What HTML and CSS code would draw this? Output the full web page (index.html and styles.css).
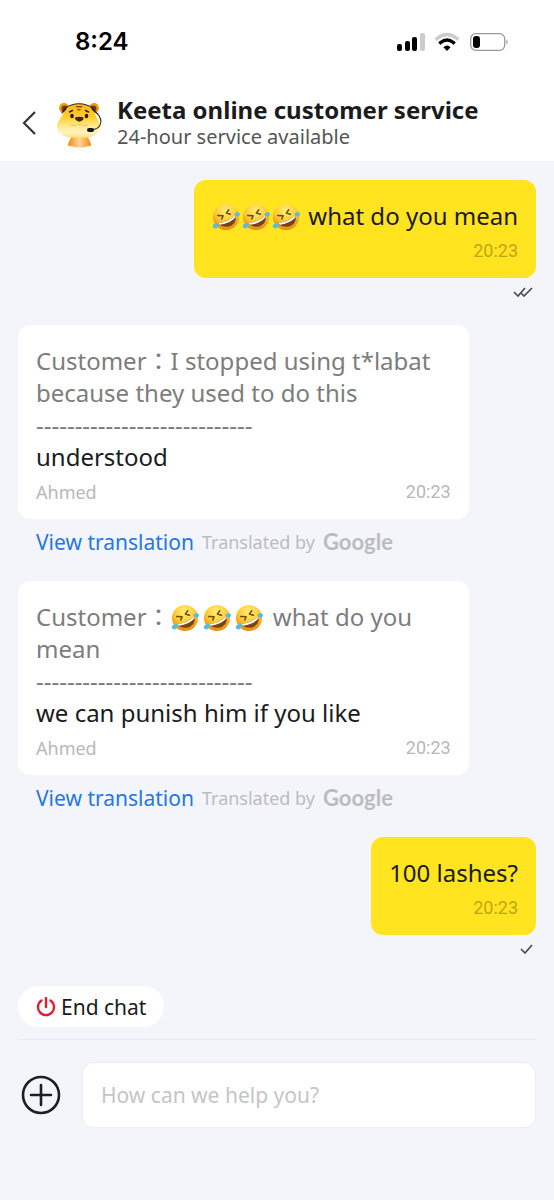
FILE: index.html
```html
<!DOCTYPE html>
<html lang="en">
<head>
    <meta charset="UTF-8">
    <meta name="viewport" content="width=device-width, initial-scale=1.0">
    <title>Keeta online customer service</title>
    <link rel="stylesheet" href="styles.css">
</head>
<body>
    <!-- Shared icons -->
    <svg class="sprite" aria-hidden="true">
        <defs>
            <radialGradient id="face" cx="50%" cy="25%" r="75%">
                <stop offset="0" stop-color="#fff176"/>
                <stop offset="0.55" stop-color="#fcc934"/>
                <stop offset="1" stop-color="#e8860c"/>
            </radialGradient>
        </defs>
        <symbol id="rofl" viewBox="0 0 28 28">
            <circle cx="14" cy="14" r="13" fill="url(#face)"/>
            <path d="M5.7 12.6l5.4.2-1.3 3.2M16.8 6.8l-2.4 3.2 4 1.2" fill="none" stroke="#6b4a06" stroke-width="1.5" stroke-linecap="round" stroke-linejoin="round"/>
            <path d="M6.4 20Q17 19 23.4 12.4C25 17.2 22 22 17.4 23.4 13 24.6 8.6 23.4 6.4 20z" fill="#7a4316"/>
            <path d="M6.4 20Q17 19 23.4 12.4L23.4 14.6Q17.6 20.8 8.2 21.8z" fill="#fff"/>
            <path d="M1.2 21.8c2-1.8 4-2.2 5.6-1.6.2 2.4-1 5-3.4 5.2-2 .1-3.2-2-2.2-3.6zM22.4 11.2c1-1.6 3-2.2 4.600-1.600 1.400.8 1.200 3-.2 3.600-1.600.6-3.600 0-4.400-2z" fill="#52bde6"/>
        </symbol>
    </svg>

    <header>
        <div class="status-bar">
            <span class="clock">8:24</span>
            <svg class="status-icons" viewBox="0 0 112 20" aria-hidden="true">
                <rect x="0" y="12" width="5" height="7" rx="2"/>
                <rect x="8" y="9" width="5" height="10" rx="2"/>
                <rect x="15" y="5" width="5" height="14" rx="2"/>
                <rect x="23" y="1" width="5" height="18" rx="2" fill="#ccc"/>
                <path d="M40 6.5Q50 -1.5 60 6.5" fill="none" stroke="#ccc" stroke-width="3.4" stroke-linecap="square"/>
                <path d="M43.6 10.5Q50 5.500 56.400 10.500" fill="none" stroke="#000" stroke-width="3.4" stroke-linecap="square"/>
                <path d="M50 19l-3.6-3.8Q50 12 53.6 15.2z"/>
                <rect x="73.7" y="1.7" width="34" height="16.6" rx="5" fill="#fff" stroke="#999" stroke-width="1.3"/>
                <rect x="76" y="4" width="7" height="12" rx="3"/>
                <path d="M109.5 7.5q2.4 2.5 0 5z" fill="#888"/>
            </svg>
        </div>
        <div class="title-bar">
            <button class="back-btn" aria-label="Back">
                <svg viewBox="0 0 14 24"><path d="M13 1L2 12l11 11" fill="none" stroke="#33363c" stroke-width="2.2"/></svg>
            </button>
            <svg class="avatar" viewBox="0 0 48 48" aria-hidden="true">
                <defs>
                    <linearGradient id="fur" x1="0" y1="0" x2="0" y2="1">
                        <stop offset="0" stop-color="#ffb60c"/>
                        <stop offset="0.4" stop-color="#ffcf30"/>
                        <stop offset="0.65" stop-color="#ffe98c"/>
                        <stop offset="0.85" stop-color="#fff3c4"/>
                        <stop offset="1" stop-color="#ffdc70"/>
                    </linearGradient>
                    <linearGradient id="body" x1="0" y1="0" x2="1" y2="0">
                        <stop offset="0" stop-color="#f58a07"/>
                        <stop offset="0.5" stop-color="#ffd49a"/>
                        <stop offset="1" stop-color="#f58a07"/>
                    </linearGradient>
                </defs>
                <path d="M16 35h15l4 9q0 3-3 2-8 3-17 0-3 1-3-2z" fill="url(#body)"/>
                <circle cx="8" cy="8" r="5" fill="#f29a10"/>
                <circle cx="38" cy="8" r="5" fill="#f29a10"/>
                <circle cx="8.500" cy="8.500" r="3" fill="#7a3b0a"/>
                <circle cx="37.500" cy="8.500" r="3" fill="#7a3b0a"/>
                <path d="M23 3.500C32 3.500 38 8 39.500 15c.8 3 4.500 6 4.500 12 0 8-8 11-21 11S1 35 1 27c0-6 4.500-9 5.500-12C8 8 14 3.500 23 3.500z" fill="url(#fur)"/>
                <path d="M5 14Q7 8 12 6.500L9 11zM41 14Q39 8 34 6.500L37 11z" fill="#34200d"/>
                <path d="M8 8.500Q23 -1 38 8.500" fill="none" stroke="#35312b" stroke-width="1.200"/>
                <path d="M19.500 6h7l-1 1.500h-5zM21 9h4l-1 1.500h-2z" fill="#8a500d"/>
                <path d="M13.500 12l3-1.500M29.500 10.500l3 1.500" stroke="#34200d" stroke-width="1.500" stroke-linecap="round"/>
                <ellipse cx="16" cy="16" rx="1.800" ry="2.300" fill="#2c1a0d"/>
                <ellipse cx="30.500" cy="16" rx="1.800" ry="2.300" fill="#2c1a0d"/>
                <path d="M19 17.500q4.300-1.500 8.600 0 .3 3-4.300 4.300-4.600-1.300-4.300-4.300z" fill="#4a230b"/>
                <path d="M14 25q5 2 9-1 4 3 9 1" fill="none" stroke="#e8bd5c" stroke-width="0.800"/>
                <path d="M40 12q7 7 4 13-2 4-7 4.500" fill="none" stroke="#3a342d" stroke-width="1.100"/>
                <rect x="31" y="28" width="7" height="4" rx="2" fill="#151515"/>
            </svg>
            <div class="title-text">
                <h1>Keeta online customer service</h1>
                <p>24-hour service available</p>
            </div>
        </div>
    </header>

    <main>
        <div class="message sent">
            <div class="bubble">
                <p><span class="emojis" role="img" aria-label="Rolling on the floor laughing"><svg><use href="#rofl"/></svg><svg><use href="#rofl"/></svg><svg><use href="#rofl"/></svg></span> what do you mean</p>
                <div class="meta"><time>20:23</time></div>
            </div>
            <svg class="ticks" viewBox="0 0 20 10" aria-label="Read"><path d="M1 5l4 4 7-8M8 6l3 3 8-8" fill="none" stroke="#4a4c50" stroke-width="1.7"/></svg>
        </div>

        <div class="message received">
            <div class="bubble">
                <p class="quote">Customer：I stopped using t*labat because they used to do this<br>----------------------------</p>
                <p>understood</p>
                <div class="meta"><span>Ahmed</span><time>20:23</time></div>
            </div>
            <div class="translate">
                <a href="#">View translation</a>
                <span>Translated by</span>
                <span class="google">Google</span>
            </div>
        </div>

        <div class="message received">
            <div class="bubble">
                <p class="quote">Customer：<span class="emojis spaced" role="img" aria-label="Rolling on the floor laughing"><svg><use href="#rofl"/></svg><svg><use href="#rofl"/></svg><svg><use href="#rofl"/></svg></span> what do you mean<br>----------------------------</p>
                <p>we can punish him if you like</p>
                <div class="meta"><span>Ahmed</span><time>20:23</time></div>
            </div>
            <div class="translate">
                <a href="#">View translation</a>
                <span>Translated by</span>
                <span class="google">Google</span>
            </div>
        </div>

        <div class="message sent">
            <div class="bubble">
                <p>100 lashes?</p>
                <div class="meta"><time>20:23</time></div>
            </div>
            <svg class="ticks" viewBox="0 0 20 10" aria-label="Sent"><path d="M8 5l4 4 7-8" fill="none" stroke="#4a4c50" stroke-width="1.7"/></svg>
        </div>
    </main>

    <footer>
        <button class="end-btn">
            <svg viewBox="0 0 20 20" aria-hidden="true"><path d="M5.5 3.5a8 8 0 1 0 9 0M10 1v9" fill="none" stroke="#d9222f" stroke-width="2.4" stroke-linecap="round"/></svg>
            End chat
        </button>
        <form class="composer">
            <button type="button" class="add-btn" aria-label="Add attachment">
                <svg viewBox="0 0 40 40"><path d="M20 10v20M10 20h20" stroke="#1d1f24" stroke-width="2.6" stroke-linecap="round"/><circle cx="20" cy="20" r="18" fill="none" stroke="#1d1f24" stroke-width="2.6"/></svg>
            </button>
            <input type="text" placeholder="How can we help you?" aria-label="Message">
        </form>
    </footer>
</body>
</html>
```

FILE: styles.css
```css
/* Global styles */
* {
    box-sizing: border-box;
}

body {
    margin: 0;
    min-height: 100vh;
    display: flex;
    flex-direction: column;
    background-color: #f4f5fa;
    color: #1b1b1d;
    font-family: 'Noto Sans', 'Noto Sans CJK TC', sans-serif;
    font-size: 24px;
    line-height: 32px;
}

h1, p {
    margin: 0;
}

button, input {
    font: inherit;
    color: inherit;
}

button {
    padding: 0;
    border: none;
    background: none;
    cursor: pointer;
}

.sprite {
    position: absolute;
    width: 0;
    height: 0;
}

/* Header */
header {
    background-color: #fff;
    padding-bottom: 12px;
}

.status-bar {
    display: flex;
    justify-content: space-between;
    align-items: center;
    height: 84px;
    padding: 0 45px 0 75px;
}

.clock {
    font-family: Inter, sans-serif;
    font-size: 24px;
    font-weight: 600;
    color: #000;
}

.status-icons {
    width: 112px;
    height: 20px;
}

.title-bar {
    display: flex;
    align-items: center;
    padding: 12px 22px 0;
}

.back-btn svg {
    display: block;
    width: 14px;
    height: 24px;
}

.avatar {
    width: 48px;
    height: 48px;
    margin: 2px 13px 0 20px;
}

h1 {
    font-size: 24px;
    line-height: 28px;
}

.title-text p {
    font-size: 20px;
    line-height: 25px;
    color: #555;
}

/* Messages */
main {
    display: flex;
    flex-direction: column;
    padding: 19px 18px 0;
}

.message {
    display: flex;
    flex-direction: column;
    align-items: flex-start;
}

.bubble {
    padding: 20px 18px 15px;
    border-radius: 12px;
    background-color: #fff;
}

.sent {
    align-items: flex-end;
    padding-bottom: 28px;
}

.sent .bubble {
    background-color: #ffe41f;
}

.received {
    padding-bottom: 28px;
}

.received .bubble {
    width: 87%;
}

.quote {
    color: #7d7d7d;
}

.emojis svg {
    width: 28px;
    height: 28px;
    margin-right: 2px;
    vertical-align: -6px;
}

.spaced svg {
    margin-right: 4px;
}

.meta {
    display: flex;
    justify-content: space-between;
    margin-top: 7px;
    font-size: 18px;
    line-height: 24px;
    color: #b8b8b8;
}

.meta time {
    margin-left: auto;
    font-family: Roboto, sans-serif;
}

.sent .meta {
    color: #bda616;
}

.ticks {
    width: 20px;
    height: 10px;
    margin: 9px 3px 0;
}

.translate {
    display: flex;
    align-items: center;
    gap: 8px;
    height: 22px;
    margin: 12px 18px 0;
    font-size: 18px;
    color: #bbbcc0;
}

.translate a {
    font-size: 21px;
    color: #2377e6;
    text-decoration: none;
}

.google {
    font-family: Lato, sans-serif;
    font-size: 22px;
    font-weight: 700;
}

/* Footer */
footer {
    padding: 4px 18px 72px;
}

.end-btn {
    display: flex;
    align-items: center;
    gap: 5px;
    height: 41px;
    padding: 0 18px;
    border-radius: 21px;
    background-color: #fff;
    font-size: 21px;
}

.end-btn svg {
    width: 20px;
    height: 20px;
}

.composer {
    display: flex;
    align-items: center;
    gap: 21px;
    margin-top: 12px;
    padding-top: 22px;
    border-top: 1px solid #e9eaef;
}

.add-btn {
    margin-left: 3px;
}

.add-btn svg {
    display: block;
    width: 40px;
    height: 40px;
}

.composer input {
    flex: 1;
    min-width: 0;
    height: 66px;
    padding: 0 18px;
    border: 1px solid #ededf1;
    border-radius: 12px;
    background-color: #fff;
    font-size: 21px;
    outline: none;
}

.composer input::placeholder {
    color: #c4c5c9;
    opacity: 1;
}
```
